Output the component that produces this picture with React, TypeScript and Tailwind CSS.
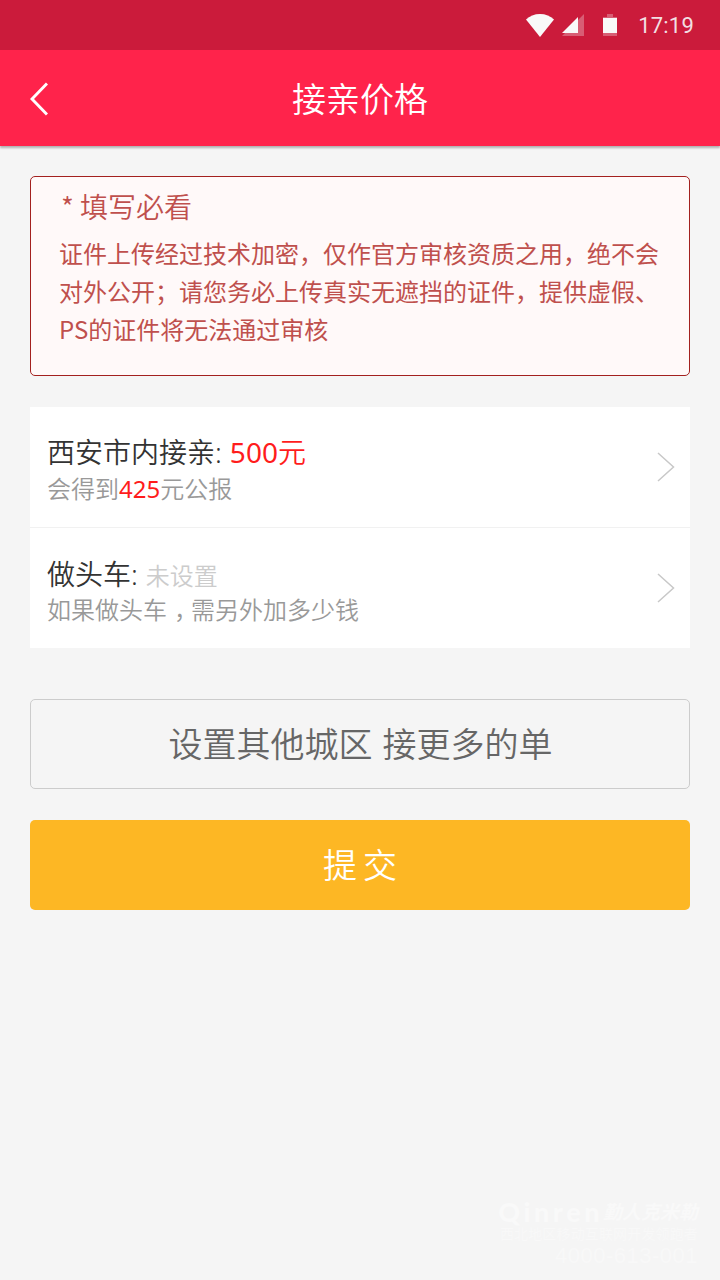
import type { ReactNode } from 'react';

function StatusBar() {
  return (
    <div className="flex h-[50px] items-center justify-end bg-[#cb1b3b] pr-[26px] text-[#f9f9f9]">
      <svg width="28" height="23" viewBox="0 0 28 23" fill="currentColor">
        <path d="M14 23 0 5.500C3.500 2 8.500 0 14 0s10.500 2 14 5.500Z" />
      </svg>
      <svg className="ml-2" width="22" height="22" viewBox="0 0 22 22" fill="currentColor">
        <path d="M0 22 22 0v22Z" opacity="0.3" />
        <path d="M0 19 16 3v16Z" />
      </svg>
      <svg className="ml-[19px]" width="14" height="22" viewBox="0 0 14 22" fill="currentColor">
        <path d="M4 0h6v3h4v19H0V3h4Z" opacity="0.3" />
        <path d="M0 4h14v15H0Z" />
      </svg>
      <span className="ml-[21px] pt-0.5 font-['Roboto'] text-[22px] leading-[48px] tracking-[0.2px] text-[#f2dfe2]">
        17:19
      </span>
    </div>
  );
}

function Header({ title }: { title: string }) {
  return (
    <header className="grid h-24 grid-cols-[80px_1fr_80px] items-center bg-[#ff234b] pt-0.5 text-white shadow-[0_2px_2px_rgba(0,0,0,0.28)]">
      <button className="pl-[30px]" aria-label="返回">
        <svg width="18" height="34" viewBox="0 0 18 34" fill="none" stroke="currentColor" strokeWidth="3">
          <path d="M17 1.500 2 17l15 15.500" />
        </svg>
      </button>
      <h1 className="text-center text-[34px] leading-[48px] font-[350]">{title}</h1>
    </header>
  );
}

interface PriceRowProps {
  label: string;
  value: ReactNode;
  children: ReactNode;
  compact?: boolean;
}

function PriceRow({ label, value, children, compact }: PriceRowProps) {
  return (
    <li className="flex h-[120px] items-center justify-between pr-[15px] pl-[17px] not-last:h-[121px]">
      <div className={compact ? 'pt-[9px]' : 'pt-[6px]'}>
        <p className={`text-[28px] font-[350] text-[#333] ${compact ? 'leading-[34px]' : 'leading-[38px]'}`}>
          {label}:<span className="ml-2">{value}</span>
        </p>
        <p className="text-2xl leading-[36px] font-[350] text-[#999]">{children}</p>
      </div>
      <svg width="18" height="30" viewBox="0 0 18 30" fill="none" stroke="#c8c8c8" strokeWidth="1.500">
        <path d="M1 1l15.500 14L1 29" />
      </svg>
    </li>
  );
}

function Watermark() {
  return (
    <footer className="flex flex-col items-end pr-[22px] pb-[13px] text-[#f9f9f9]">
      <p className="flex items-center text-[19px] leading-[24px] font-bold italic">
        <span className="font-['Lato'] text-[27px] leading-[22px] font-black tracking-[3.500px] not-italic">Qinren</span>
        勤人克米勒
      </p>
      <p className="text-[14px] leading-[20px] tracking-[0.15px] text-[#f8f8f8]">西北地区移动互联网开发领跑者</p>
      <p className="font-['Liberation_Sans'] text-[22px] leading-[23px] tracking-[0.5px] text-[#f8f8f8]">4000-613-001</p>
    </footer>
  );
}

export default function App() {
  return (
    <div className="flex h-[1280px] w-[720px] flex-col bg-[#f5f5f5] font-['Noto_Sans','Noto_Sans_CJK_SC',sans-serif]">
      <StatusBar />
      <Header title="接亲价格" />

      <main className="flex-1 px-[30px] pt-[30px]">
        <section className="h-[200px] rounded-[5px] border border-[#a3211f] bg-[#fff9f9] pt-[10px] pl-[28px] font-['Noto_Sans_CJK_SC',sans-serif] text-[#bf504d]">
          <h2 className="pl-0.5 text-[28px] leading-[38px] font-[350]">* 填写必看</h2>
          <p className="mt-[9px] text-2xl leading-[38px]">
            证件上传经过技术加密，仅作官方审核资质之用，绝不会
            <br />
            对外公开；请您务必上传真实无遮挡的证件，提供虚假、
            <br />
            PS的证件将无法通过审核
          </p>
        </section>

        <ul className="mt-[31px] divide-y divide-[#f1f1f1] bg-white">
          <PriceRow
            label="西安市内接亲"
            value={
              <span className="text-[#ff1c1c]">
                <span className="font-normal">500</span>元
              </span>
            }
          >
            会得到<span className="font-normal text-[#ff1c1c]">425</span>元公报
          </PriceRow>
          <PriceRow label="做头车" value={<span className="text-2xl text-[#ccc]">未设置</span>} compact>
            如果做头车<span className="pl-[7px] tracking-[-7px]">，</span>需另外加多少钱
          </PriceRow>
        </ul>

        <button className="mt-[51px] block h-[90px] w-full rounded-[5px] border border-[#ccc] pt-px pl-px text-[34px] font-[350] [word-spacing:1px] text-[#666]">
          设置其他城区 接更多的单
        </button>
        <button className="mt-[31px] block h-[90px] w-full rounded-[5px] bg-[#fdb724] text-[34px] font-[350] [word-spacing:-3px] text-white">
          提 交
        </button>
      </main>

      <Watermark />
    </div>
  );
}
